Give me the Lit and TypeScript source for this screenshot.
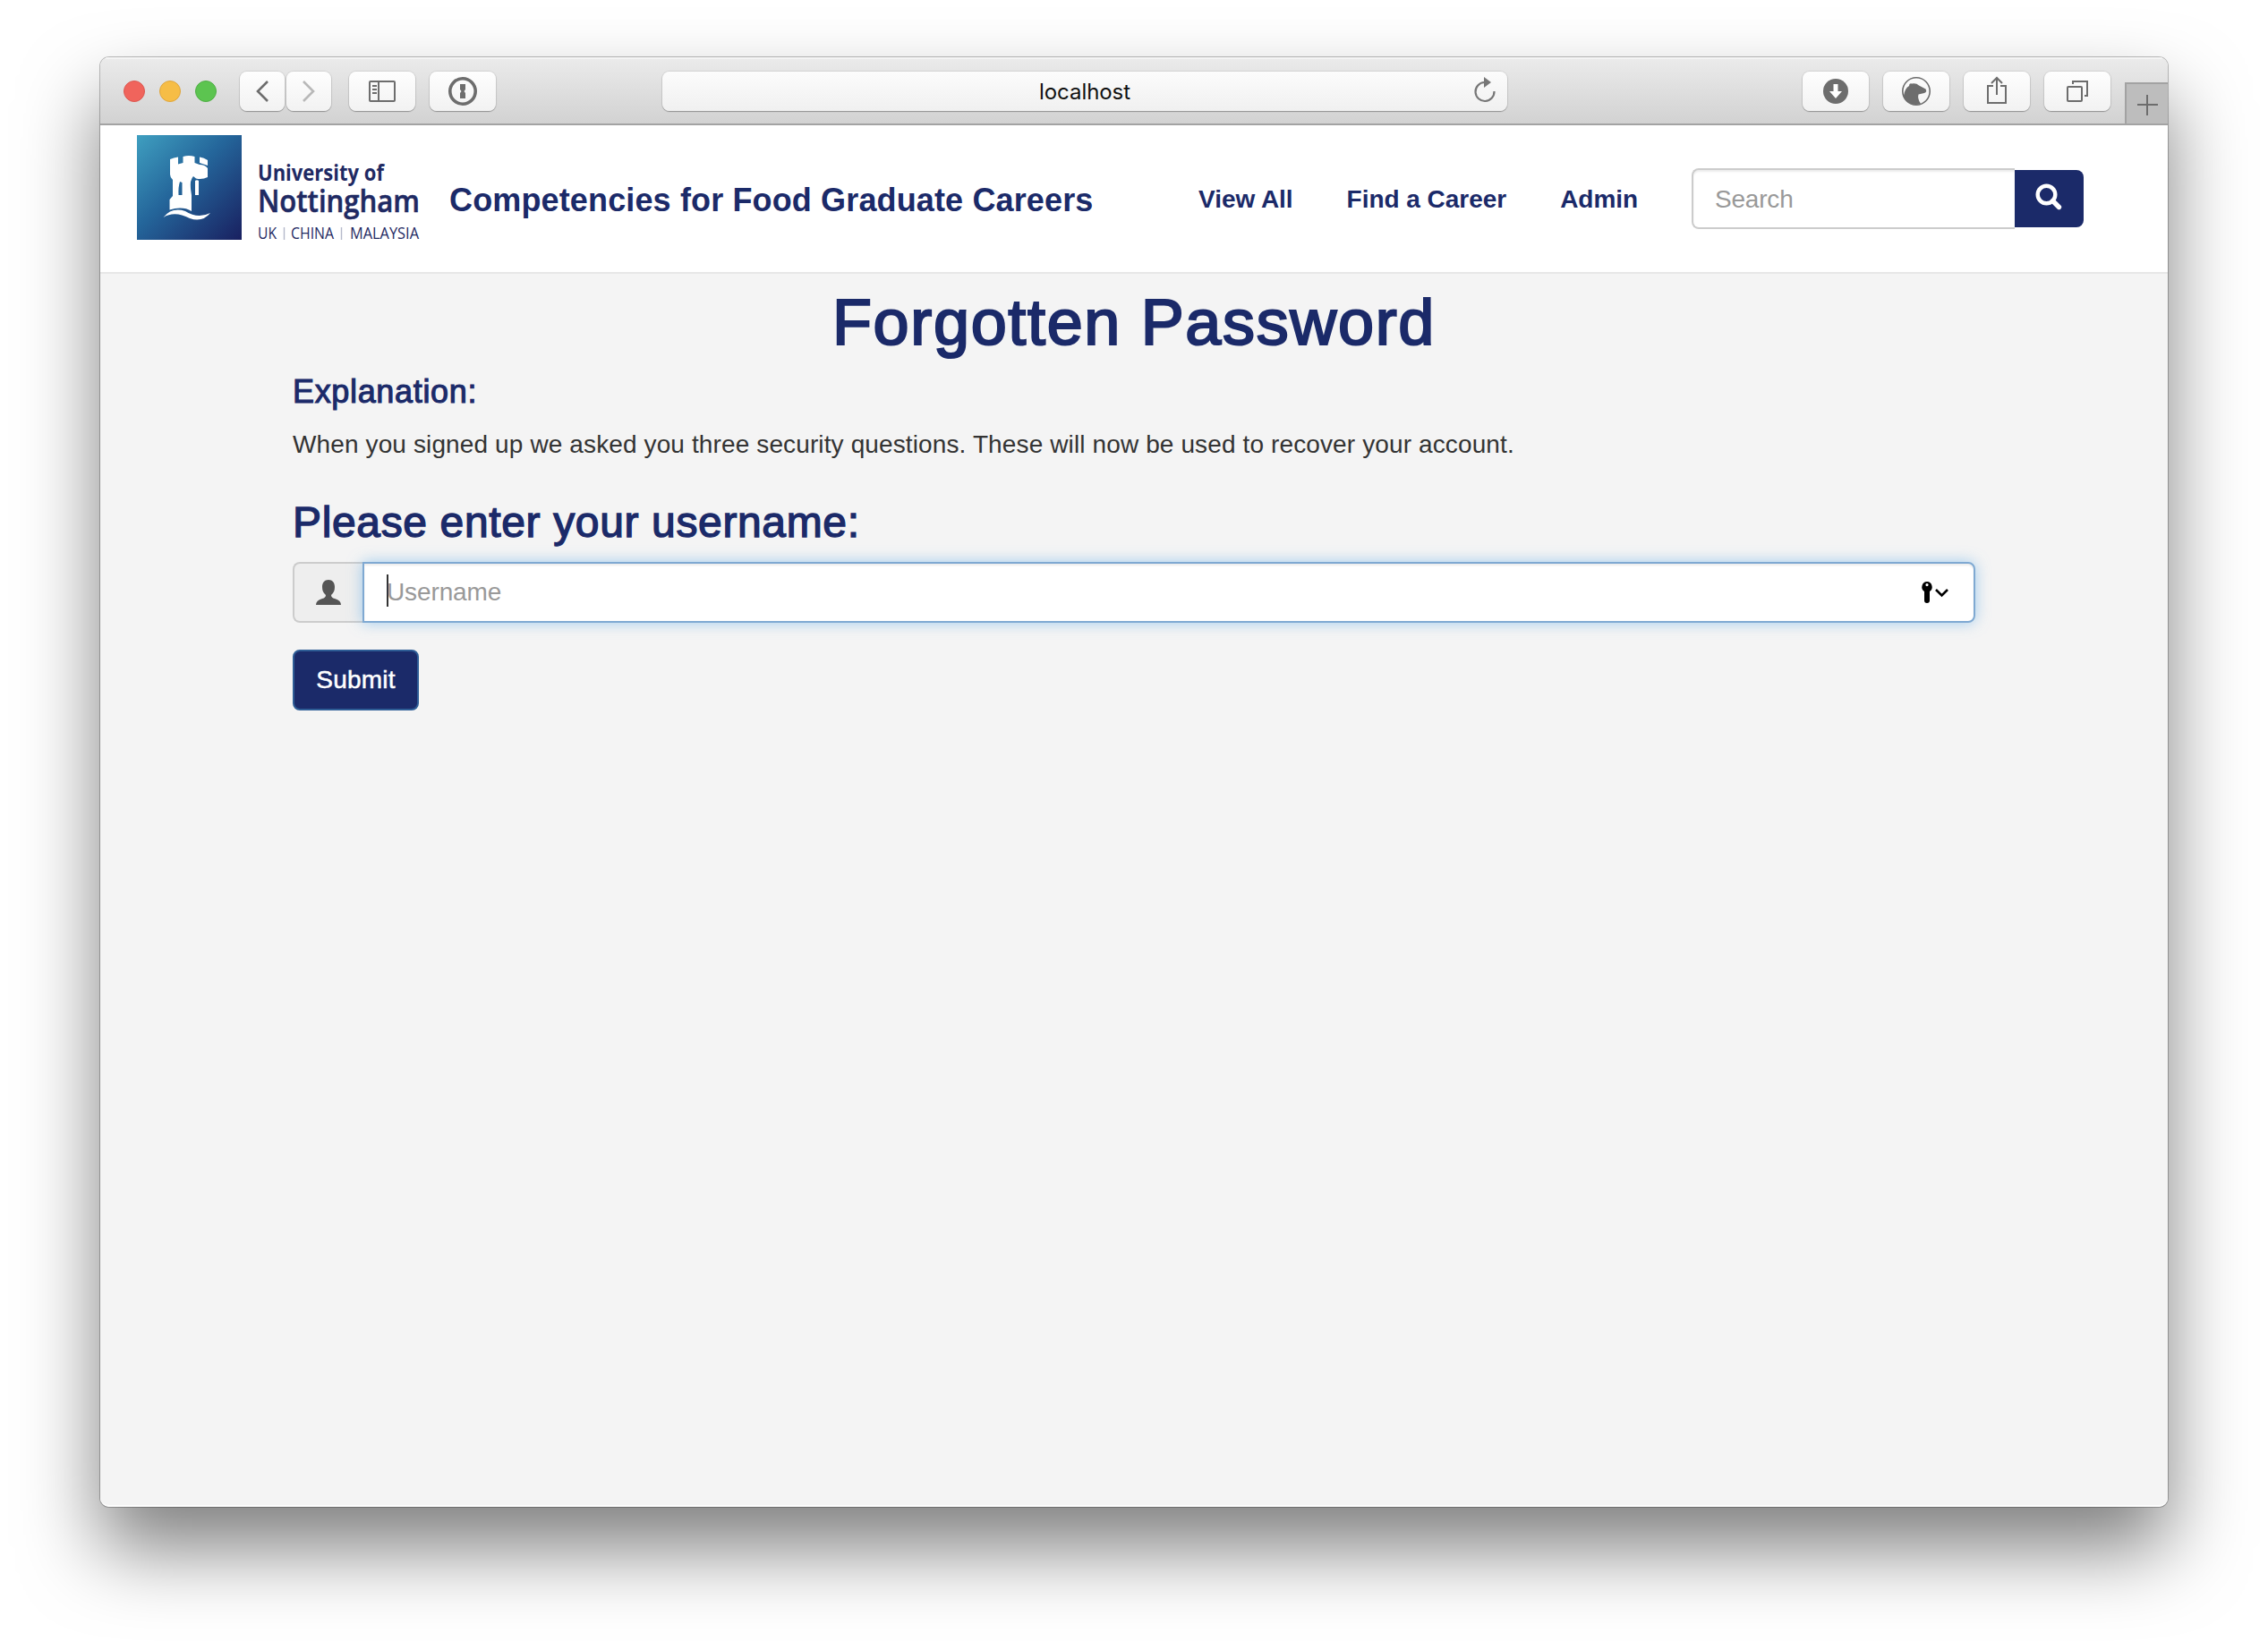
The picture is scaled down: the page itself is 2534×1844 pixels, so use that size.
import { LitElement, html, css } from "lit";
import { customElement } from "lit/decorators.js";

@customElement("browser-toolbar")
class BrowserToolbar extends LitElement {
  static styles = css`
    :host {
      display: grid;
      grid-template-columns: 628px 944px 1fr;
      height: 76px;
      box-sizing: border-box;
      background: linear-gradient(#ebebeb, #d2d2d2);
      border-bottom: 2px solid #a3a3a3;
      box-shadow: inset 0 2px 0 #f4f4f4;
      font-family: "Inter", "Liberation Sans", sans-serif;
    }
    .left, .right { display: flex; align-items: flex-start; }
    .left { padding: 16px 0 0 26px; }
    .right { justify-content: flex-end; padding-top: 16px; gap: 16px; }
    .lights { display: flex; gap: 16px; margin: 10px 26px 0 0; }
    .light { width: 24px; height: 24px; border-radius: 50%; box-sizing: border-box; }
    .red { background: #f0645c; border: 1px solid #dc5750; }
    .yellow { background: #f6bd46; border: 1px solid #dfa63d; }
    .green { background: #5cc450; border: 1px solid #4fae45; }
    .btn {
      display: flex; align-items: center; justify-content: center;
      width: 74px; height: 44px; border-radius: 8px;
      background: linear-gradient(#fefefe, #f2f2f2);
      box-shadow: 0 0 1px 1px rgba(0, 0, 0, 0.09), 0 1px 1px rgba(0, 0, 0, 0.25);
    }
    .nav { width: 50px; }
    .back { margin-right: 2px; }
    .fwd { margin-right: 20px; }
    .side { margin-right: 16px; }
    .address {
      display: grid; grid-template-columns: 48px 1fr 48px; align-items: center;
      height: 44px; margin-top: 16px; border-radius: 8px;
      background: linear-gradient(#fcfcfc, #f0f0f0);
      box-shadow: 0 0 1px 1px rgba(0, 0, 0, 0.09), 0 1px 1px rgba(0, 0, 0, 0.25);
    }
    .host { grid-column: 2; text-align: center; font-size: 24px; line-height: 44px; padding-top: 2px; height: 42px; line-height: 42px; letter-spacing: -0.05px; color: #111; }
    .tab {
      display: flex; align-items: center; justify-content: center;
      width: 48px; height: 46px; margin: 12px 0 0 0; box-sizing: border-box;
      background: #bdbdbd; border: 2px solid #a2a2a2; border-width: 2px 0 0 2px;
    }
    svg { display: block; fill: none; stroke: #6d6d6d; stroke-width: 2; }
  `;
  render() {
    return html`
      <div class="left">
        <div class="lights"><span class="light red"></span><span class="light yellow"></span><span class="light green"></span></div>
        <div class="btn nav back"><svg width="50" height="44"><path d="M31 11L20 22L31 33" stroke-width="2.6"/></svg></div>
        <div class="btn nav fwd"><svg width="50" height="44"><path d="M19 11L30 22L19 33" stroke="#b8b8b8" stroke-width="2.6"/></svg></div>
        <div class="btn side"><svg width="74" height="44"><rect x="23" y="11" width="28" height="22" rx="1"/><path d="M33 11V33M26 16H31M26 20H31M26 24H31" /></svg></div>
        <div class="btn"><svg width="74" height="44"><circle cx="37" cy="22" r="14.2" stroke-width="3.6"/><path d="M34 14H40V20L38.500 22L40 24V30H34V24L35.500 22L34 20Z" fill="#6d6d6d" stroke="none"/></svg></div>
      </div>
      <div class="address">
        <span class="host">localhost</span>
        <svg width="48" height="44"><path d="M22.500 12A10.500 10.500 0 1 0 33.500 22" stroke-width="2.200" stroke="#777"/><path d="M22 6L30 12L22 18Z" fill="#777" stroke="none"/></svg>
      </div>
      <div class="right">
        <div class="btn"><svg width="74" height="44"><circle cx="37" cy="22" r="14" fill="#6d6d6d" stroke="none"/><path d="M34.500 14H39.500V22H44L37 30L30 22H34.500Z" fill="#fff" stroke="none"/></svg></div>
        <div class="btn"><svg width="74" height="44"><circle cx="37" cy="22" r="15.200" stroke-width="1.600"/><path d="M23 27Q24 19 29 16Q29 12.500 32 13.500Q37 12.500 40 15.500L47.500 19.500Q49.500 22.500 46 24L39.500 25.500Q38 30 42 36Q35 38.500 29 35Q23 31.500 23 27Z" fill="#6d6d6d" stroke="none"/></svg></div>
        <div class="btn"><svg width="74" height="44"><path d="M33 16H27V35H47V16H41M37 26V8M31 13L37 7L43 13"/></svg></div>
        <div class="btn"><svg width="74" height="44"><rect x="26" y="17" width="16" height="16" rx="1"/><path d="M32 14V11H48V27H45"/></svg></div>
        <div class="tab"><svg width="46" height="44"><path d="M12 23H35M23 12V35"/></svg></div>
      </div>`;
  }
}

@customElement("site-header")
class SiteHeader extends LitElement {
  static styles = css`
    :host {
      display: flex; height: 166px; box-sizing: border-box;
      background: #fff; border-bottom: 2px solid #e7e7e7;
      font-family: "Liberation Sans", Arial, sans-serif;
      color: #1b2a69;
    }
    .crest { display: block; margin: 11px 0 0 41px; flex: none; }
    .words { width: 184px; margin: 38px 0 0 18px; flex: none; overflow: visible; font-family: "Open Sans", "Noto Sans", sans-serif; white-space: nowrap; }
    .words text { fill: #1f2a63; }
    .title { margin: 62px 0 0 30px; width: 837px; flex: none; font-size: 36px; line-height: 44px; font-weight: 700; letter-spacing: 0.14px; white-space: nowrap; }
    nav { display: flex; gap: 60px; margin-top: 65px; width: 551px; flex: none; font-size: 28px; line-height: 36px; font-weight: 700; letter-spacing: -0.03px; white-space: nowrap; }
    .search { display: flex; margin-top: 48px; width: 438px; height: 68px; }
    .field { flex: 1; box-sizing: border-box; border: 2px solid #ccc; border-right: 0; border-radius: 8px 0 0 8px; padding-left: 24px; font-size: 28px; line-height: 65px; letter-spacing: -0.2px; color: #999; box-shadow: inset 0 2px 2px rgba(0, 0, 0, 0.075); }
    .go { width: 77px; height: 64px; margin-top: 2px; border-radius: 0 8px 8px 0; background: #1b2a69; }
    .go svg { display: block; }
  `;
  render() {
    return html`
      <svg class="crest" width="117" height="117" viewBox="0 0 117 117">
        <defs><linearGradient id="g" x1="0" y1="0" x2="1" y2="1"><stop offset="0" stop-color="#3f9fc0"/><stop offset=".45" stop-color="#24659a"/><stop offset="1" stop-color="#192060"/></linearGradient></defs>
        <rect width="117" height="117" fill="url(#g)"/>
        <path fill="#fff" fill-rule="evenodd" d="M37 27Q41 25 46 24.500V32.500L51.500 31V24Q58 22 64.500 24V31L70 33Q76 33 79 37V47Q73 50 66 48.500L63 46Q59 50 60 60L61 67V85Q51 79 36.500 83.500V72L40 68V50Q37 47 37 44ZM48 52Q46 58 46.500 67H50.500V53Z"/>
        <path fill="#fff" d="M70 24.500Q75 25 79 28V34L70 31ZM65 51Q67 49.500 69 51V67H65ZM29.500 92Q39 80 54 85Q68 94 82 87Q73 98 59 93Q42 84 29.500 92Z"/>
      </svg>
      <svg class="words" width="184" height="96">
        <text x="0" y="24" font-size="25.500" font-weight="700" textLength="141" lengthAdjust="spacingAndGlyphs">University of</text>
        <text x="0" y="59" font-size="35" font-weight="600" stroke="#1f2a63" stroke-width=".6" textLength="181" lengthAdjust="spacingAndGlyphs">Nottingham</text>
        <text x="0" y="89" font-size="17.500" textLength="21" lengthAdjust="spacingAndGlyphs">UK</text>
        <text x="37" y="89" font-size="17.500" textLength="48" lengthAdjust="spacingAndGlyphs">CHINA</text>
        <text x="103" y="89" font-size="17.500" textLength="77" lengthAdjust="spacingAndGlyphs">MALAYSIA</text>
        <path d="M29.500 76V90M93.500 76V90" stroke="#b5b9ca" stroke-width="1.400"/>
      </svg>
      <div class="title">Competencies for Food Graduate Careers</div>
      <nav><span>View All</span><span>Find a Career</span><span>Admin</span></nav>
      <div class="search">
        <div class="field">Search</div>
        <div class="go"><svg width="77" height="64"><circle cx="35.500" cy="27.500" r="9.800" fill="none" stroke="#fff" stroke-width="4.400"/><path d="M42.500 34.500L49.500 41.500" stroke="#fff" stroke-width="5.400" stroke-linecap="round"/></svg></div>
      </div>`;
  }
}

@customElement("password-form")
class PasswordForm extends LitElement {
  static styles = css`
    :host { display: block; padding: 0 215px; font-family: "Liberation Sans", Arial, sans-serif; color: #1b2a69; }
    h1, h2, h3, p { margin: 0; font-weight: 400; white-space: nowrap; }
    h1, h2, h3 { -webkit-text-stroke: 1.1px #1b2a69; }
    h1 { padding-top: 14px; text-align: center; font-size: 72px; line-height: 80px; letter-spacing: 1.65px; -webkit-text-stroke-width: 2.2px; }
    h3 { margin-top: 18px; font-size: 36px; line-height: 40px; letter-spacing: 0.66px; }
    p { margin-top: 19px; font-size: 28px; line-height: 40px; letter-spacing: 0.122px; color: #333; }
    h2 { margin-top: 41px; font-size: 48px; line-height: 52px; letter-spacing: 0.64px; -webkit-text-stroke-width: 1.4px; }
    .group { display: flex; height: 68px; margin-top: 18px; }
    .addon { width: 78px; box-sizing: border-box; border: 2px solid #ccc; border-right: 0; border-radius: 8px 0 0 8px; background: #eee; }
    .field { flex: 1; display: flex; align-items: center; box-sizing: border-box; border: 2px solid #7fa9d2; border-radius: 0 8px 8px 0; background: #fff; padding: 0 27px 0 25px; box-shadow: inset 0 2px 2px rgba(0, 0, 0, 0.075), 0 0 16px rgba(102, 175, 233, 0.6); }
    .caret { width: 2px; height: 36px; margin-top: -5px; background: #333; }
    .hint { flex: 1; font-size: 28px; line-height: 64px; letter-spacing: -0.12px; color: #999; margin-left: -2px; }
    .submit { display: inline-block; box-sizing: border-box; width: 141px; height: 68px; margin-top: 30px; border: 2px solid #2e5d96; border-radius: 8px; background: #1b2a69; color: #fff; text-align: center; font-size: 28px; line-height: 64px; letter-spacing: 0.2px; -webkit-text-stroke: 0.5px #fff; }
    svg { display: block; }
  `;
  render() {
    return html`
      <h1>Forgotten Password</h1>
      <h3>Explanation:</h3>
      <p>When you signed up we asked you three security questions. These will now be used to recover your account.</p>
      <h2>Please enter your username:</h2>
      <div class="group">
        <div class="addon"><svg width="76" height="64"><path fill="#555" d="M38 18C42.500 18 45 21 45 26Q45 32 41 35Q41 38 45 39Q52 41 52 46H24Q24 41 31 39Q35 38 35 35Q31 32 31 26C31 21 33.500 18 38 18Z"/></svg></div>
        <div class="field">
          <span class="caret"></span><span class="hint">Username</span>
          <svg width="32" height="26"><path fill-rule="evenodd" d="M7 1A6 6 0 0 1 10 12V22Q10 25 7 25Q4 25 4 22V12A6 6 0 0 1 7 1ZM7 3A1.600 1.600 0 1 0 7 6.200A1.600 1.600 0 1 0 7 3Z"/><path d="M17 10L23.500 16.500L30 10" fill="none" stroke="#000" stroke-width="2.600"/></svg>
        </div>
      </div>
      <div class="submit">Submit</div>`;
  }
}

@customElement("app-root")
class AppRoot extends LitElement {
  static styles = css`
    :host { display: flex; box-sizing: border-box; width: 2534px; height: 1844px; padding: 64px 112px 160px; background: #fff; overflow: hidden; }
    .window { flex: 1; border-radius: 10px; box-shadow: 0 0 0 1px rgba(0, 0, 0, 0.25), 0 47px 86px rgba(0, 0, 0, 0.5); }
    .clip { height: 100%; box-sizing: border-box; border-radius: 10px; overflow: hidden; background: #f4f4f4; border-bottom: 2px solid #fdfdfd; }
  `;
  render() {
    return html`<div class="window"><div class="clip">
      <browser-toolbar></browser-toolbar>
      <site-header></site-header>
      <password-form></password-form>
    </div></div>`;
  }
}
